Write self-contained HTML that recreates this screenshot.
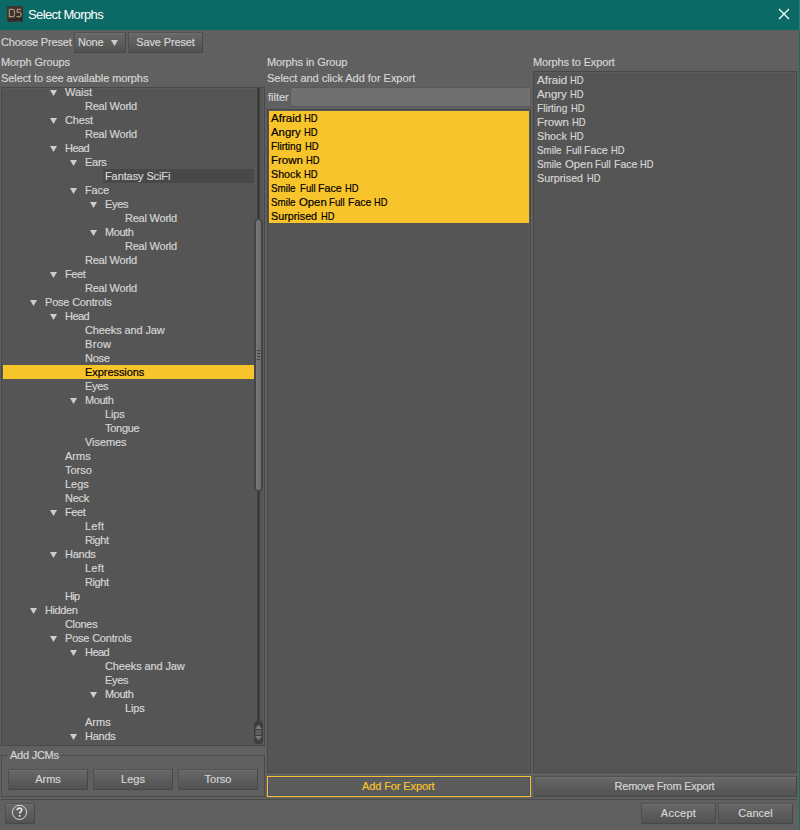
<!DOCTYPE html>
<html><head><meta charset="utf-8"><title>Select Morphs</title>
<style>
html,body{margin:0;padding:0;}
body{width:800px;height:830px;background:#606060;position:relative;overflow:hidden;font-family:"Liberation Sans",sans-serif;font-size:11px;color:#d6d6d6;}
div{position:absolute;box-sizing:border-box;}
.t{white-space:nowrap;height:14px;line-height:14px;color:#d6d6d6;-webkit-text-stroke:0.18px #d6d6d6;}
.dk{color:#000;-webkit-text-stroke:0.2px #000;}
.w{display:inline-block;width:0;position:relative;vertical-align:top;transform-origin:0 0;white-space:pre;}
#title{left:0;top:0;width:800px;height:30px;background:#0c6a66;}
#title .cap{left:28px;top:0;height:30px;line-height:29px;font-size:13px;letter-spacing:-0.62px;color:#fff;white-space:nowrap;}
.btn{border:1px solid #454a49;border-top-color:#505352;border-left-color:#4c504f;background:linear-gradient(#696969,#5e5e5e 45%,#525252);color:#d6d6d6;text-align:center;line-height:19px;white-space:nowrap;box-shadow:inset 0 1px 0 #6e6e6e;-webkit-text-stroke:0.18px currentColor;}
.panel{background:#555555;border:1px solid #484848;box-shadow:inset -1px 1px 0 rgba(255,255,255,0.035);}
.tri{width:7px;height:6px;background:#cdcdcd;clip-path:polygon(0 0,100% 0,50% 100%);}
.selrow{left:3px;width:251px;height:14px;background:#f8c42c;}
.hovrow{height:14px;background:#484848;}
</style></head><body>
<div id="title">
  <div style="left:7px;top:6px;width:16px;height:16px;background:#3a3533;border-radius:1px;"></div>
  <svg style="position:absolute;left:7px;top:6px" width="16" height="16" viewBox="0 0 16 16">
    <path d="M2.3 3.3H6.1Q7.4 3.3 7.4 4.8V8.9Q7.4 10.7 5.8 10.7H2.3Z" stroke="#d9a980" stroke-width="0.95" fill="none"/>
    <path d="M14 3.3H10.1V6.2H12.6Q13.9 6.2 13.9 7.6V9.2Q13.9 10.7 12.4 10.7H9.6" stroke="#d9a980" stroke-width="0.95" fill="none"/>
    <rect x="1.9" y="10.1" width="1.1" height="1" fill="#f2a11c"/><rect x="13" y="10.1" width="1" height="0.9" fill="#4f9a3c"/>
    <rect x="6" y="8" width="0.9" height="0.9" fill="#120a08"/><rect x="11.9" y="8.1" width="0.9" height="0.9" fill="#120a08"/>
    <path d="M2.4 12.9V14.7M3.9 13.4H5.7M7.2 13L8.4 14.5L9.6 13.2L10.5 12.2L11.7 13.4M15 12.3L13.3 13.5L15 14.7" stroke="#0c0506" stroke-width="0.9" fill="none"/>
  </svg>
  <div class="cap">Select Morphs</div>
  <svg style="position:absolute;left:778px;top:8px" width="12" height="12" viewBox="0 0 12 12"><path d="M1 1L11 11M11 1L1 11" stroke="#f4ffff" stroke-width="1.3" fill="none"/></svg>
  <div style="left:799px;top:0;width:1px;height:830px;background:#147069"></div><div style="left:799px;top:0;width:1px;height:30px;background:#2c7b78"></div>
</div>

<div class="t" style="left:1px;top:35px;letter-spacing:-0.167px;">Choose Preset</div>
<div class="btn" style="left:74px;top:32px;width:52px;height:21px;text-align:left;padding-left:3px;letter-spacing:-0.267px;">None</div>
<div class="tri" style="left:111px;top:40px"></div>
<div class="btn" style="left:128px;top:32px;width:75px;height:21px;letter-spacing:-0.150px;">Save Preset</div>

<div class="t" style="left:1px;top:55px;letter-spacing:-0.127px;">Morph Groups</div>
<div class="t" style="left:1px;top:71px;letter-spacing:-0.083px;">Select to see available morphs</div>
<div class="t" style="left:267px;top:55px;letter-spacing:-0.114px;">Morphs in Group</div>
<div class="t" style="left:267px;top:71px;letter-spacing:-0.033px;">Select and click Add for Export</div>
<div class="t" style="left:533px;top:55px;letter-spacing:-0.133px;">Morphs to Export</div>

<!-- tree panel -->
<div class="panel" style="left:1px;top:87px;width:264px;height:659px"></div>
<div style="left:0;top:0;width:265px;height:745px;overflow:hidden;clip-path:inset(88px 0 0 0)">
<div class="tri" style="left:50px;top:90px"></div>
<div class="t" style="left:65px;top:85px;">Waist</div>
<div class="t" style="left:85px;top:99px;letter-spacing:-0.222px;">Real World</div>
<div class="tri" style="left:50px;top:118px"></div>
<div class="t" style="left:65px;top:113px;letter-spacing:-0.150px;">Chest</div>
<div class="t" style="left:85px;top:127px;letter-spacing:-0.222px;">Real World</div>
<div class="tri" style="left:50px;top:146px"></div>
<div class="t" style="left:65px;top:141px;letter-spacing:-0.533px;">Head</div>
<div class="tri" style="left:70px;top:160px"></div>
<div class="t" style="left:85px;top:155px;letter-spacing:-0.267px;">Ears</div>
<div class="hovrow" style="top:169px;left:103px;width:151px"></div>
<div class="t" style="left:105px;top:169px;letter-spacing:-0.100px;">Fantasy SciFi</div>
<div class="tri" style="left:70px;top:188px"></div>
<div class="t" style="left:85px;top:183px;letter-spacing:-0.133px;">Face</div>
<div class="tri" style="left:90px;top:202px"></div>
<div class="t" style="left:105px;top:197px;letter-spacing:-0.300px;">Eyes</div>
<div class="t" style="left:125px;top:211px;letter-spacing:-0.222px;">Real World</div>
<div class="tri" style="left:90px;top:230px"></div>
<div class="t" style="left:105px;top:225px;letter-spacing:-0.450px;">Mouth</div>
<div class="t" style="left:125px;top:239px;letter-spacing:-0.222px;">Real World</div>
<div class="t" style="left:85px;top:253px;letter-spacing:-0.222px;">Real World</div>
<div class="tri" style="left:50px;top:272px"></div>
<div class="t" style="left:65px;top:267px;letter-spacing:-0.400px;">Feet</div>
<div class="t" style="left:85px;top:281px;letter-spacing:-0.222px;">Real World</div>
<div class="tri" style="left:30px;top:300px"></div>
<div class="t" style="left:45px;top:295px;letter-spacing:-0.200px;">Pose Controls</div>
<div class="tri" style="left:50px;top:314px"></div>
<div class="t" style="left:65px;top:309px;letter-spacing:-0.533px;">Head</div>
<div class="t" style="left:85px;top:323px;letter-spacing:-0.123px;">Cheeks and Jaw</div>
<div class="t" style="left:85px;top:337px;letter-spacing:0.333px;">Brow</div>
<div class="t" style="left:85px;top:351px;letter-spacing:-0.267px;">Nose</div>
<div class="selrow" style="top:365px"></div>
<div class="t dk" style="left:85px;top:365px;letter-spacing:-0.060px;">Expressions</div>
<div class="t" style="left:85px;top:379px;letter-spacing:-0.300px;">Eyes</div>
<div class="tri" style="left:70px;top:398px"></div>
<div class="t" style="left:85px;top:393px;letter-spacing:-0.450px;">Mouth</div>
<div class="t" style="left:105px;top:407px;letter-spacing:-0.133px;">Lips</div>
<div class="t" style="left:105px;top:421px;letter-spacing:-0.280px;">Tongue</div>
<div class="t" style="left:85px;top:435px;letter-spacing:-0.067px;">Visemes</div>
<div class="t" style="left:65px;top:449px;">Arms</div>
<div class="t" style="left:65px;top:463px;">Torso</div>
<div class="t" style="left:65px;top:477px;">Legs</div>
<div class="t" style="left:65px;top:491px;letter-spacing:-0.267px;">Neck</div>
<div class="tri" style="left:50px;top:510px"></div>
<div class="t" style="left:65px;top:505px;letter-spacing:-0.400px;">Feet</div>
<div class="t" style="left:85px;top:519px;letter-spacing:0.200px;">Left</div>
<div class="t" style="left:85px;top:533px;letter-spacing:-0.400px;">Right</div>
<div class="tri" style="left:50px;top:552px"></div>
<div class="t" style="left:65px;top:547px;letter-spacing:-0.250px;">Hands</div>
<div class="t" style="left:85px;top:561px;letter-spacing:0.200px;">Left</div>
<div class="t" style="left:85px;top:575px;letter-spacing:-0.400px;">Right</div>
<div class="t" style="left:65px;top:589px;letter-spacing:-0.700px;">Hip</div>
<div class="tri" style="left:30px;top:608px"></div>
<div class="t" style="left:45px;top:603px;letter-spacing:-0.400px;">Hidden</div>
<div class="t" style="left:65px;top:617px;letter-spacing:-0.320px;">Clones</div>
<div class="tri" style="left:50px;top:636px"></div>
<div class="t" style="left:65px;top:631px;letter-spacing:-0.200px;">Pose Controls</div>
<div class="tri" style="left:70px;top:650px"></div>
<div class="t" style="left:85px;top:645px;letter-spacing:-0.533px;">Head</div>
<div class="t" style="left:105px;top:659px;letter-spacing:-0.123px;">Cheeks and Jaw</div>
<div class="t" style="left:105px;top:673px;letter-spacing:-0.300px;">Eyes</div>
<div class="tri" style="left:90px;top:692px"></div>
<div class="t" style="left:105px;top:687px;letter-spacing:-0.450px;">Mouth</div>
<div class="t" style="left:125px;top:701px;letter-spacing:-0.133px;">Lips</div>
<div class="t" style="left:85px;top:715px;">Arms</div>
<div class="tri" style="left:70px;top:734px"></div>
<div class="t" style="left:85px;top:729px;letter-spacing:-0.250px;">Hands</div>
</div>
<!-- scrollbar -->
<div style="left:257px;top:88px;width:3px;height:634px;background:linear-gradient(90deg,#3e4140,#383a39 60%,#444)"></div>
<div style="left:254px;top:219px;width:9px;height:272px;background:#424645;border-radius:4px"></div>
<div style="left:256px;top:220px;width:5px;height:270px;background:linear-gradient(90deg,#787878,#6a6a6a);border-radius:3px"></div>
<div style="left:257px;top:350px;width:3px;height:1px;background:#3c3c3c"></div>
<div style="left:257px;top:353px;width:3px;height:1px;background:#3c3c3c"></div>
<div style="left:257px;top:356px;width:3px;height:1px;background:#3c3c3c"></div>
<div style="left:257px;top:359px;width:3px;height:1px;background:#3c3c3c"></div>
<div style="left:254px;top:721px;width:9px;height:23px;background:#3b3e3d;border-radius:4px"></div>
<svg style="position:absolute;left:254px;top:721px" width="9" height="23" viewBox="0 0 9 23">
  <path d="M4.5 3.5L8 8H1Z" fill="#7a7a7a"/><rect x="1.5" y="9" width="6" height="5" fill="#5e5e5e"/><path d="M1 15H8L4.5 19.5Z" fill="#7a7a7a"/>
</svg>

<!-- middle -->
<div class="t" style="left:268px;top:90px">filter</div>
<div style="left:290px;top:87px;width:241px;height:20px;background:#707070;border:1px solid #5a5a5a"></div>
<div class="panel" style="left:267px;top:109px;width:264px;height:664px"></div>
<div style="left:269px;top:111px;width:260px;height:112px;background:#f8c42c"></div>
<div class="t dk" style="left:271px;top:111px;width:130px"><span class="w" style="left:0.07px;transform:scaleX(1.0509)">Afraid </span><span class="w" style="left:33.13px;transform:scaleX(0.8558)">HD</span></div>
<div class="t dk" style="left:271px;top:125px;width:130px"><span class="w" style="left:0.08px;transform:scaleX(1.0335)">Angry </span><span class="w" style="left:33.13px;transform:scaleX(0.8558)">HD</span></div>
<div class="t dk" style="left:271px;top:139px;width:130px"><span class="w" style="left:0.08px;transform:scaleX(0.9177)">Flirting </span><span class="w" style="left:34.13px;transform:scaleX(0.8558)">HD</span></div>
<div class="t dk" style="left:271px;top:153px;width:130px"><span class="w" style="left:-0.02px;transform:scaleX(1.0449)">Frown </span><span class="w" style="left:35.13px;transform:scaleX(0.8558)">HD</span></div>
<div class="t dk" style="left:271px;top:167px;width:130px"><span class="w" style="left:0.16px;transform:scaleX(0.9748)">Shock </span><span class="w" style="left:33.13px;transform:scaleX(0.8558)">HD</span></div>
<div class="t dk" style="left:271px;top:181px;width:130px"><span class="w" style="left:0.11px;transform:scaleX(0.8934)">Smile </span><span class="w" style="left:28.52px;transform:scaleX(0.8775)">Full </span><span class="w" style="left:47.44px;transform:scaleX(0.9733)">Face </span><span class="w" style="left:74.34px;transform:scaleX(0.8491)">HD</span></div>
<div class="t dk" style="left:271px;top:195px;width:130px"><span class="w" style="left:0.11px;transform:scaleX(0.8934)">Smile </span><span class="w" style="left:28.34px;transform:scaleX(1.0305)">Open </span><span class="w" style="left:57.51px;transform:scaleX(0.8836)">Full </span><span class="w" style="left:76.75px;transform:scaleX(0.9604)">Face </span><span class="w" style="left:103.34px;transform:scaleX(0.8423)">HD</span></div>
<div class="t dk" style="left:271px;top:209px;width:130px"><span class="w" style="left:0.05px;transform:scaleX(0.9795)">Surprised </span><span class="w" style="left:50.34px;transform:scaleX(0.8423)">HD</span></div>

<!-- right -->
<div class="panel" style="left:533px;top:71px;width:264px;height:702px"></div>
<div class="t" style="left:537px;top:73px;width:130px"><span class="w" style="left:0.07px;transform:scaleX(1.0509)">Afraid </span><span class="w" style="left:33.13px;transform:scaleX(0.8558)">HD</span></div>
<div class="t" style="left:537px;top:87px;width:130px"><span class="w" style="left:0.08px;transform:scaleX(1.0335)">Angry </span><span class="w" style="left:33.13px;transform:scaleX(0.8558)">HD</span></div>
<div class="t" style="left:537px;top:101px;width:130px"><span class="w" style="left:0.08px;transform:scaleX(0.9177)">Flirting </span><span class="w" style="left:34.13px;transform:scaleX(0.8558)">HD</span></div>
<div class="t" style="left:537px;top:115px;width:130px"><span class="w" style="left:-0.02px;transform:scaleX(1.0449)">Frown </span><span class="w" style="left:35.13px;transform:scaleX(0.8558)">HD</span></div>
<div class="t" style="left:537px;top:129px;width:130px"><span class="w" style="left:0.16px;transform:scaleX(0.9748)">Shock </span><span class="w" style="left:33.13px;transform:scaleX(0.8558)">HD</span></div>
<div class="t" style="left:537px;top:143px;width:130px"><span class="w" style="left:0.11px;transform:scaleX(0.8934)">Smile </span><span class="w" style="left:28.52px;transform:scaleX(0.8775)">Full </span><span class="w" style="left:47.44px;transform:scaleX(0.9733)">Face </span><span class="w" style="left:74.34px;transform:scaleX(0.8491)">HD</span></div>
<div class="t" style="left:537px;top:157px;width:130px"><span class="w" style="left:0.11px;transform:scaleX(0.8934)">Smile </span><span class="w" style="left:28.34px;transform:scaleX(1.0305)">Open </span><span class="w" style="left:57.51px;transform:scaleX(0.8836)">Full </span><span class="w" style="left:76.75px;transform:scaleX(0.9604)">Face </span><span class="w" style="left:103.34px;transform:scaleX(0.8423)">HD</span></div>
<div class="t" style="left:537px;top:171px;width:130px"><span class="w" style="left:0.05px;transform:scaleX(0.9795)">Surprised </span><span class="w" style="left:50.34px;transform:scaleX(0.8423)">HD</span></div>

<!-- Add JCMs -->
<div style="left:1px;top:755px;width:264px;height:42px;border:1px solid #4b4b4b"></div>
<div class="t" style="left:8px;top:748px;background:#606060;padding:0 2px;letter-spacing:-0.243px;">Add JCMs</div>
<div class="btn" style="left:8px;top:769px;width:80px;height:21px">Arms</div>
<div class="btn" style="left:93px;top:769px;width:80px;height:21px">Legs</div>
<div class="btn" style="left:178px;top:769px;width:80px;height:21px">Torso</div>

<div class="btn" style="left:267px;top:776px;width:264px;height:21px;border:1px solid #f8c42c;color:#f8c42c;background:linear-gradient(#5c5c5c,#5c5c5c 60%,#565656);box-shadow:inset 0 0 0 1px #4e5268;padding-right:1.5px;letter-spacing:-0.115px;">Add For Export</div>
<div class="btn" style="left:534px;top:776px;width:263px;height:21px;padding-right:2px;letter-spacing:-0.265px;">Remove From Export</div>

<div style="left:1px;top:799px;width:796px;height:1px;background:#4a4a4a"></div>
<div class="btn" style="left:5px;top:803px;width:30px;height:21px"></div>
<svg style="position:absolute;left:11px;top:804.4px" width="17" height="17" viewBox="0 0 17 17">
  <circle cx="8.5" cy="8.4" r="7.1" stroke="#e2e2e2" stroke-width="0.95" fill="none"/>
  <path d="M6.2 6.3C6.2 4.9 7.2 4.1 8.5 4.1C9.8 4.1 10.8 4.9 10.8 6.1C10.8 7.6 8.6 7.9 8.6 9.7" stroke="#e6e6e6" stroke-width="1.6" fill="none"/>
  <rect x="7.8" y="11" width="1.7" height="1.7" fill="#e6e6e6"/>
</svg>
<div class="btn" style="left:641px;top:803px;width:75px;height:21px;letter-spacing:0.280px;">Accept</div>
<div class="btn" style="left:718px;top:803px;width:75px;height:21px;letter-spacing:0.040px;">Cancel</div>
</body></html>
